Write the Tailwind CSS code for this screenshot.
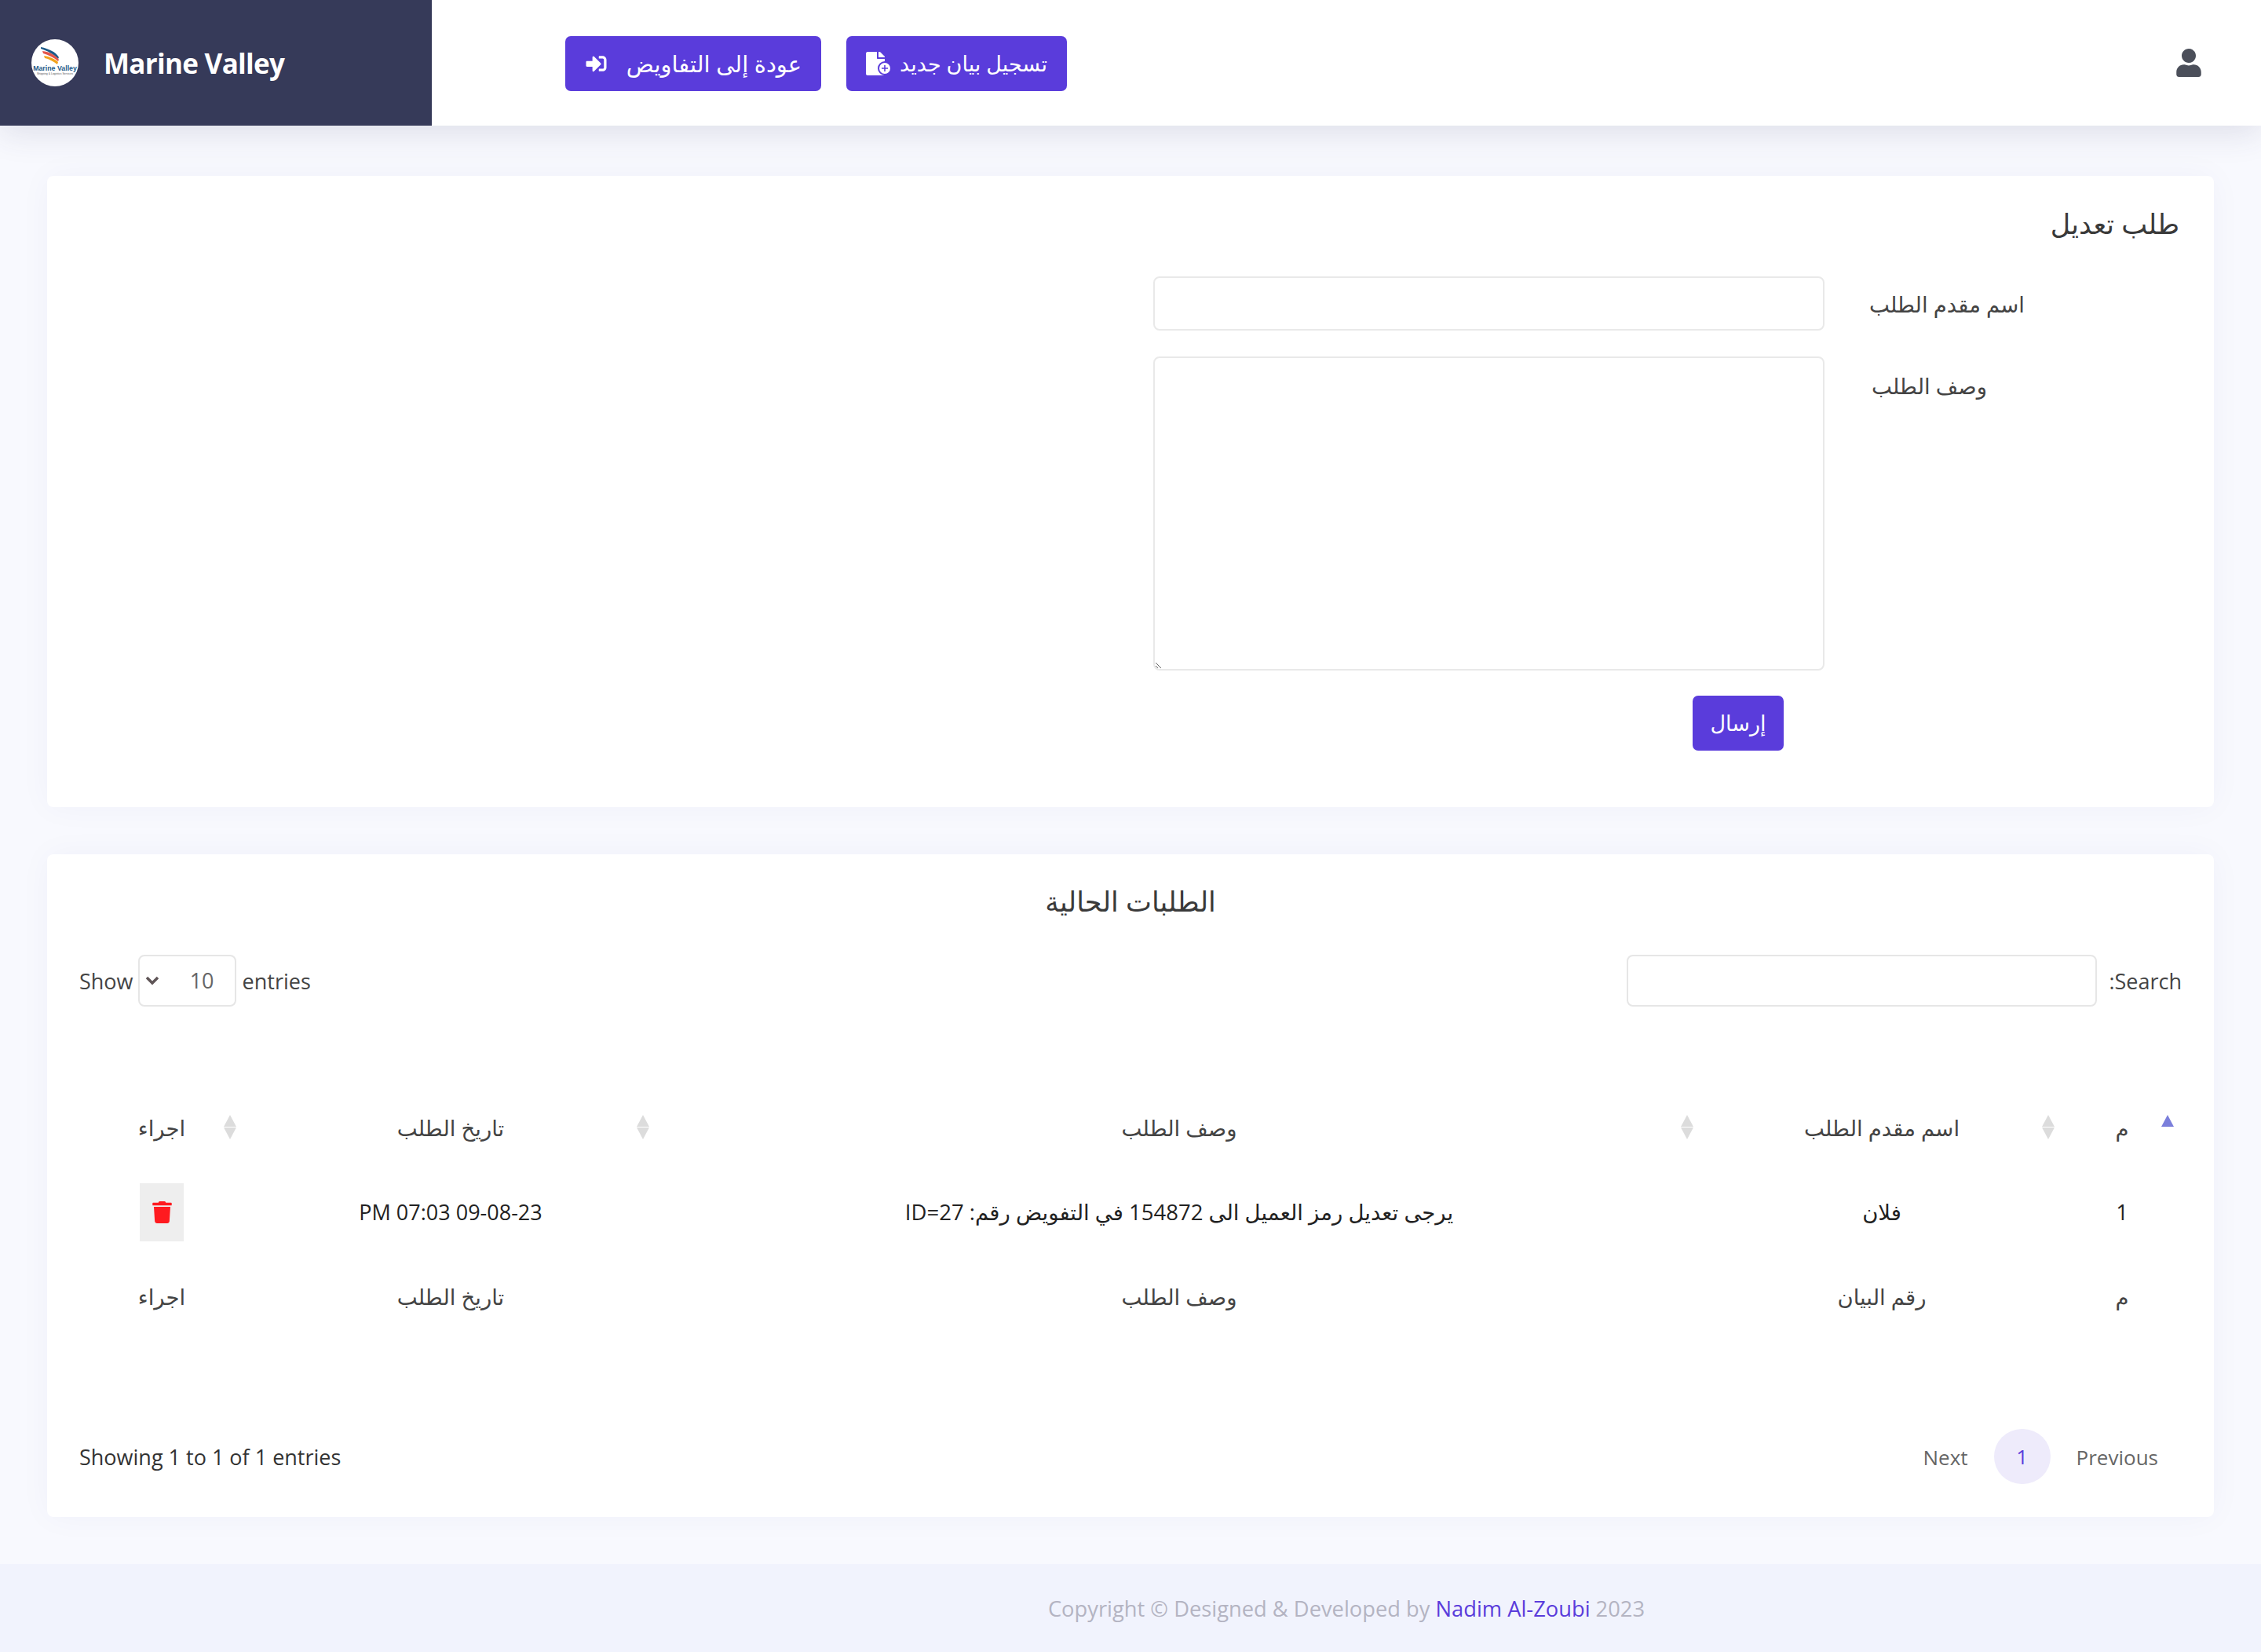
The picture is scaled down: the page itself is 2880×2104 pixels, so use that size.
<!DOCTYPE html>
<html lang="ar">
  <head>
    <meta charset="UTF-8" />
    <title>Marine Valley</title>
    <script src="https://cdn.jsdelivr.net/npm/@tailwindcss/browser@4"></script>
  </head>
  <body class="bg-[#f8f9fe] text-[#444] min-h-screen font-['Open_Sans','DejaVu_Sans',sans-serif] text-[27px]">
    <header class="relative z-10 h-[160px] bg-white flex items-center shadow-[0_8px_40px_rgba(60,60,100,0.14)]">
      <div class="w-[550px] h-full bg-[#363a59] flex items-center pl-[40px] gap-[32px]">
        <svg class="w-[60px] h-[60px]" viewBox="0 0 60 60">
          <circle cx="30" cy="30" r="30" fill="#fff" />
          <path d="M12 10 C22 12 31 16 35 23 L34 25 C28 19 21 15 12 12 Z" fill="#1d5b8a" />
          <path d="M14 15 C23 16 31 20 35 26 L34 28 C28 23 22 20 15 18 Z" fill="#e2574c" />
          <path d="M16 21 C23 22 30 25 34 29 L33 32 C28 28 22 25 17 24 Z" fill="#f2a31b" />
          <text x="30" y="40" text-anchor="middle" font-size="8.800" font-weight="700" fill="#1d5b8a" font-family="Liberation Sans">Marine Valley</text>
          <text x="30" y="45" text-anchor="middle" font-size="3.500" fill="#555" font-family="Liberation Sans">Shipping &amp; Logistics Services</text>
        </svg>
        <span class="text-white font-bold text-[35px] tracking-[-0.7px] mt-[2px]">Marine Valley</span>
      </div>
      <nav class="flex items-center gap-[32px] pl-[170px] mt-[2px]">
        <a href="#" class="w-[326px] h-[70px] bg-[#5a3cdb] rounded-[7px] text-white flex items-center justify-center gap-[24px] text-[29px]">
          <svg class="w-[29px] h-[26px] fill-white" viewBox="0 0 512 512"><path d="M416 448h-84c-6.6 0-12-5.4-12-12v-40c0-6.6 5.4-12 12-12h84c17.7 0 32-14.3 32-32V160c0-17.7-14.3-32-32-32h-84c-6.6 0-12-5.4-12-12V76c0-6.6 5.4-12 12-12h84c53 0 96 43 96 96v192c0 53-43 96-96 96zm-47-201L201 79c-15-15-41-4.5-41 17v96H24c-13.3 0-24 10.7-24 24v96c0 13.3 10.7 24 24 24h136v96c0 21.5 26 32 41 17l168-168c9.3-9.4 9.3-24.6 0-34z" /></svg>
          <span dir="rtl">عودة إلى التفاويض</span>
        </a>
        <a href="#" class="w-[281px] h-[70px] bg-[#5a3cdb] rounded-[7px] text-white flex items-center justify-center gap-[10px]">
          <svg class="w-[33px] h-[30px]" viewBox="0 0 33 30">
            <path d="M14 8V0H2C1 0 0 1 0 2v26c0 1 1 2 2 2h20c1 0 2-1 2-2V9h-9c-.6 0-1-.4-1-1zM24 7v-.4c0-.4-.2-.8-.5-1L18.500.5C18.200.2 17.800 0 17.400 0H16v7z" fill="#fff" />
            <circle cx="24" cy="21" r="8" fill="#fff" stroke="#5a3cdb" stroke-width="2" />
            <path d="M24 17v8M20 21h8" stroke="#5a3cdb" stroke-width="1.600" />
          </svg>
          <span dir="rtl">تسجيل بيان جديد</span>
        </a>
      </nav>
      <svg class="ml-auto mr-[76px] w-[32px] h-[36px] fill-[#4b4f5a]" viewBox="0 0 448 512"><path d="M224 256c70.7 0 128-57.3 128-128S294.7 0 224 0 96 57.3 96 128s57.3 128 128 128zm89.6 32h-16.7c-22.2 10.2-46.9 16-72.9 16s-50.6-5.8-72.9-16h-16.7C60.2 288 0 348.2 0 422.4V464c0 26.500 21.5 48 48 48h352c26.500 0 48-21.5 48-48v-41.6c0-74.2-60.2-134.4-134.4-134.4z" /></svg>
    </header>

    <main class="px-[60px] pt-[64px] pb-[60px] flex flex-col gap-[60px]">
      <section dir="rtl" class="h-[804px] bg-white rounded-[8px] shadow-[0_0_40px_rgba(60,60,120,0.04)] pt-[31px] pr-[44px]">
        <h2 class="h-[60px] leading-[60px] text-[35px] text-[#3a3a3a]">طلب تعديل</h2>
        <div class="flex items-center mt-[37px] pr-[197px]">
          <label class="w-[255px] pl-[60px] pt-[3px] text-left text-[27.500px] whitespace-nowrap">اسم مقدم الطلب</label>
          <input class="w-[855px] h-[69px] bg-white border-2 border-[#e9e9e9] rounded-[8px]" />
        </div>
        <div class="flex mt-[33px] pr-[197px]">
          <label class="w-[255px] pl-[60px] pt-[17px] text-left text-[27.500px] whitespace-nowrap">وصف الطلب</label>
          <textarea class="w-[855px] h-[400px] bg-white border-2 border-[#e9e9e9] rounded-[8px]"></textarea>
        </div>
        <button class="block mt-[32px] mr-[504px] w-[116px] h-[70px] bg-[#5a3cdb] text-white rounded-[7px]">إرسال</button>
      </section>

      <section class="h-[844px] bg-white rounded-[8px] shadow-[0_0_40px_rgba(60,60,120,0.04)] pt-[30px] px-[41px]">
        <h2 dir="rtl" class="h-[60px] leading-[60px] text-center text-[35px] text-[#3a3a3a]">الطلبات الحالية</h2>
        <div class="mt-[38px] h-[66px] flex items-center justify-between">
          <div class="flex items-center gap-[6px]">
            <span class="pt-[2px]">Show</span>
            <div class="relative w-[125px] h-[66px]">
              <select dir="rtl" class="w-full h-full appearance-none bg-white border-2 border-[#e6e6e6] rounded-[8px] pr-[26px] text-[#666]">
                <option>10</option>
              </select>
              <svg class="absolute left-[9px] top-[27px] w-[18px] h-[12px] pointer-events-none" viewBox="0 0 18 12"><path d="M2 2l7 7 7-7" fill="none" stroke="#5f5557" stroke-width="3.500" /></svg>
            </div>
            <span class="pt-[2px] pl-[2px]">entries</span>
          </div>
          <div dir="rtl" class="flex items-center gap-[15px]">
            <span class="pt-[2px]">Search:</span>
            <input class="w-[599px] h-[66px] bg-white border-2 border-[#e6e6e6] rounded-[8px]" />
          </div>
        </div>

        <table dir="rtl" class="mt-[107px] w-[2678px] table-fixed text-center text-[27.500px]">
          <colgroup>
            <col class="w-[152px]" /><col class="w-[460px]" /><col class="w-[1330px]" /><col class="w-[526px]" /><col class="w-[210px]" />
          </colgroup>
          <thead>
            <tr class="h-[100px]">
              <th class="relative font-normal pb-[4px]">م
                <svg class="absolute right-[9px] top-[31px] w-[18px] h-[16px] fill-[#7b7fdb]" viewBox="0 0 18 16"><path d="M9 0l8 15H1z" /></svg>
              </th>
              <th class="relative font-normal pb-[4px]">اسم مقدم الطلب
                <svg class="absolute right-[9px] top-[31px] w-[18px] h-[31px] fill-[#dcdcdc]" viewBox="0 0 18 31"><path d="M9 0l8 15H1zM9 31l8-15H1z" /></svg>
              </th>
              <th class="relative font-normal pb-[4px]">وصف الطلب
                <svg class="absolute right-[9px] top-[31px] w-[18px] h-[31px] fill-[#dcdcdc]" viewBox="0 0 18 31"><path d="M9 0l8 15H1zM9 31l8-15H1z" /></svg>
              </th>
              <th class="relative font-normal pb-[4px]">تاريخ الطلب
                <svg class="absolute right-[9px] top-[31px] w-[18px] h-[31px] fill-[#dcdcdc]" viewBox="0 0 18 31"><path d="M9 0l8 15H1zM9 31l8-15H1z" /></svg>
              </th>
              <th class="relative font-normal pb-[4px]">اجراء
                <svg class="absolute right-[9px] top-[31px] w-[18px] h-[31px] fill-[#dcdcdc]" viewBox="0 0 18 31"><path d="M9 0l8 15H1zM9 31l8-15H1z" /></svg>
              </th>
            </tr>
          </thead>
          <tbody class="text-[#222]">
            <tr class="h-[110px]">
              <td>1</td>
              <td>فلان</td>
              <td>يرجى تعديل رمز العميل الى 154872 في التفويض رقم: ID=27</td>
              <td class="text-[27px]">09-08-23 07:03 PM</td>
              <td>
                <button class="mx-auto flex items-center justify-center w-[56px] h-[74px] bg-[#eeeeee]">
                  <svg class="w-[25px] h-[28px] fill-[#ff1a1f]" viewBox="0 0 448 512"><path d="M432 32H312l-9.4-18.7A24 24 0 0 0 281.1 0H166.8a23.72 23.72 0 0 0-21.4 13.3L136 32H16A16 16 0 0 0 0 48v32a16 16 0 0 0 16 16h416a16 16 0 0 0 16-16V48a16 16 0 0 0-16-16zM53.2 467a48 48 0 0 0 47.9 45h245.8a48 48 0 0 0 47.9-45L416 128H32z" /></svg>
                </button>
              </td>
            </tr>
          </tbody>
          <tfoot>
            <tr class="h-[108px]">
              <td class="pb-[2px]">م</td>
              <td class="pb-[2px]">رقم البيان</td>
              <td class="pb-[2px]">وصف الطلب</td>
              <td class="pb-[2px]">تاريخ الطلب</td>
              <td class="pb-[2px]">اجراء</td>
            </tr>
          </tfoot>
        </table>

        <div class="mt-[113px] flex items-center justify-between">
          <span class="text-[#333] pt-[2px]">Showing 1 to 1 of 1 entries</span>
          <div class="flex items-center text-[#666] pr-[30px] text-[26px]">
            <a href="#" class="pt-[2px]">Next</a>
            <a href="#" class="mx-[33px] w-[72px] h-[70px] rounded-full bg-[#eeebfb] text-[#5a3cdb] flex items-center justify-center">1</a>
            <a href="#" class="pt-[2px]">Previous</a>
          </div>
        </div>
      </section>
    </main>

    <footer class="h-[112px] bg-[#f1f3fd] flex items-center pl-[550px]">
      <p class="w-full pt-[2px] text-center text-[#b4b4c2] text-[27.300px]">Copyright © Designed &amp; Developed by <a href="#" class="text-[#5a3cdb]">Nadim Al-Zoubi</a> 2023</p>
    </footer>
  </body>
</html>
